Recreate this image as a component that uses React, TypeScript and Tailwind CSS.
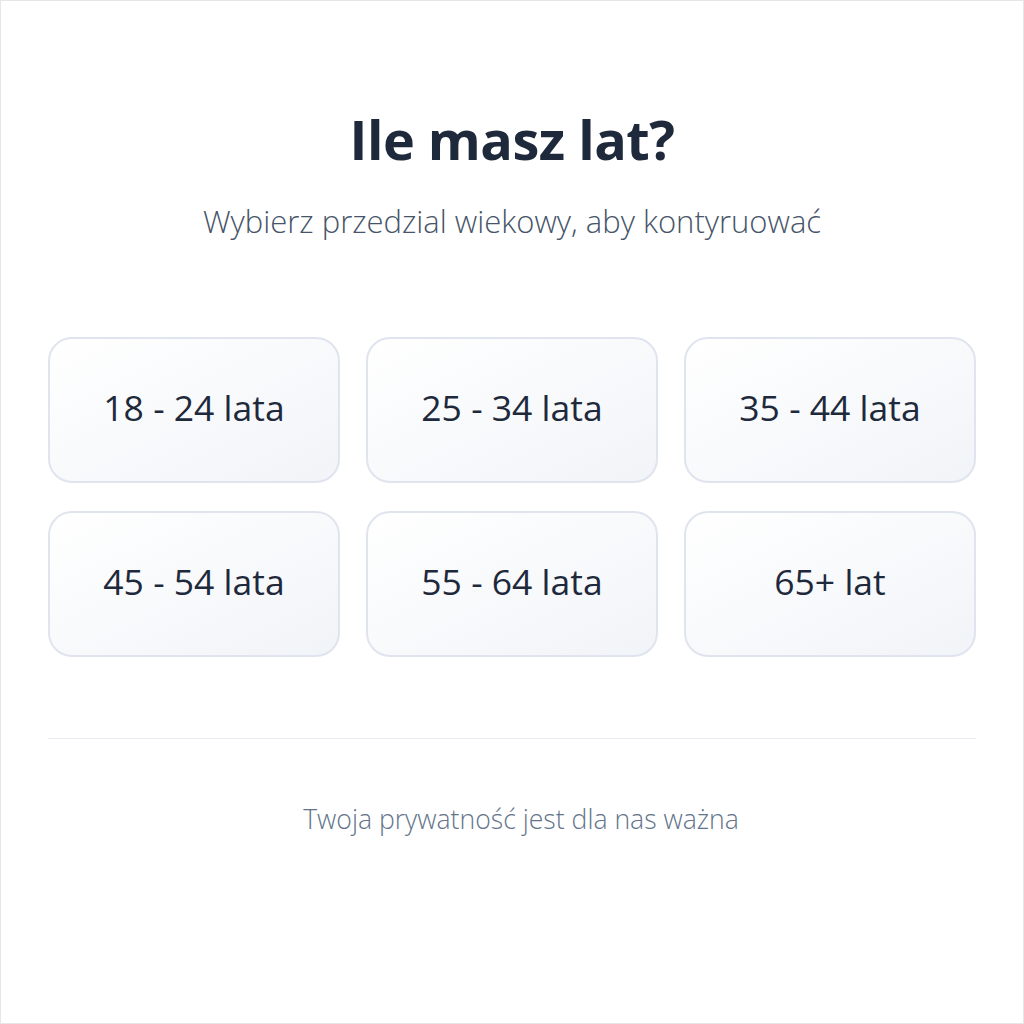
import React from "react";

const options = ["18 - 24 lata", "25 - 34 lata", "35 - 44 lata", "45 - 54 lata", "55 - 64 lata", "65+ lat"];

export default function App() {
  return (
    <div
      className="w-[1024px] h-[1024px] border border-[#e6e6e9] bg-white flex flex-col items-center px-[47px]"
      style={{ fontFamily: '"Open Sans", "Noto Sans", sans-serif' }}
    >
      <h1 className="mt-[106px] text-[54px] leading-[64px] font-bold text-[#1e293b] tracking-[-0.5px]">Ile masz lat?</h1>
      <p className="mt-[32px] text-[31px] leading-[36px] font-light text-[#475569]">Wybierz przedzial wiekowy, aby kontyruować</p>
      <div className="mt-[98px] w-full grid grid-cols-3 gap-x-[26px] gap-y-[28px]">
        {options.map((o) => (
          <button
            key={o}
            className="h-[146px] rounded-[24px] border-2 border-[#dfe4ee] bg-gradient-to-br from-white to-[#f1f4f8] flex items-center justify-center pb-[5px] text-[35.5px] text-[#1e293b]"
          >
            {o}
          </button>
        ))}
      </div>
      <div className="mt-[81px] w-full h-px bg-[#e8ebf0]" />
      <p className="mt-[63px] ml-[18px] text-[26.6px] leading-[34px] font-light text-[#64748b]">Twoja prywatność jest dla nas ważna</p>
    </div>
  );
}
